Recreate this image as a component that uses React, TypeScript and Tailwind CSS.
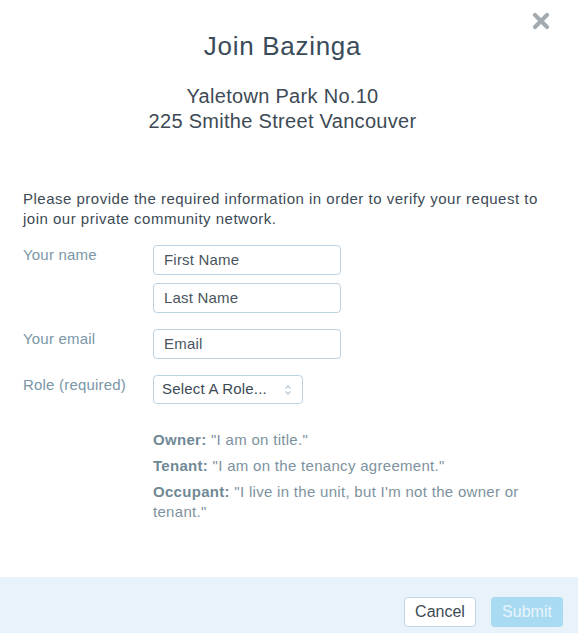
import React from "react";

export default function App() {
  return (
    <div
      className="relative w-[578px] h-[633px] bg-white flex flex-col text-[#3d4a55] overflow-hidden"
      style={{ fontFamily: '"Liberation Sans", Arial, sans-serif' }}
    >
      <button className="absolute left-[532px] top-[12px] w-[18px] h-[18px]" aria-label="Close">
        <svg viewBox="0 0 18 18" width="18" height="18">
          <path d="M3 3 L15 15 M15 3 L3 15" stroke="#a3abb0" strokeWidth="4.2" strokeLinecap="round" />
        </svg>
      </button>

      <div className="flex-1 flex flex-col">
        <div className="pr-[13px] flex flex-col items-center">
          <h1 className="mt-[30px] text-[26px] leading-[32px] tracking-[0.7px] text-[#3a4b5a]">Join Bazinga</h1>
          <div className="mt-[22px] text-[20px] leading-[25px] tracking-[0.3px] text-center text-[#3d4a55]">
            <div>Yaletown Park No.10</div>
            <div>225 Smithe Street Vancouver</div>
          </div>
        </div>

        <p className="mt-[55px] pl-[23px] pr-[30px] text-[15px] leading-[20px] tracking-[0.5px] text-[#3d4a55]">
          Please provide the required information in order to verify your request to join our private community network.
        </p>

        <div className="mt-[16px] px-[23px] flex flex-col gap-[16px] text-[15px] tracking-[0.2px]">
          <div className="flex">
            <div className="w-[130px] leading-[20px] text-[#7a96a8]">Your name</div>
            <div className="flex flex-col gap-[8px]">
              <div className="w-[188px] h-[30px] border border-[#bcd3e4] rounded-[4px] px-[10px] flex items-center text-[#4a5560]">First Name</div>
              <div className="w-[188px] h-[30px] border border-[#bcd3e4] rounded-[4px] px-[10px] flex items-center text-[#4a5560]">Last Name</div>
            </div>
          </div>
          <div className="flex">
            <div className="w-[130px] leading-[20px] text-[#7a96a8]">Your email</div>
            <div className="w-[188px] h-[30px] border border-[#bcd3e4] rounded-[4px] px-[10px] flex items-center text-[#4a5560]">Email</div>
          </div>
          <div className="flex">
            <div className="w-[130px] leading-[20px] text-[#7a96a8]">Role (required)</div>
            <div className="w-[150px] h-[29px] border border-[#bcd3e4] rounded-[4px] pl-[8px] pr-[10px] flex items-center justify-between text-[#3d4a55]">
              <span>Select A Role...</span>
              <svg width="8" height="12" viewBox="0 0 8 12">
                <path d="M1.5 4.5 L4 2 L6.5 4.5 M1.5 7.5 L4 10 L6.5 7.5" stroke="#b8c8d6" strokeWidth="1.3" fill="none" />
              </svg>
            </div>
          </div>
        </div>

        <div className="mt-[26px] pl-[153px] pr-[40px] flex flex-col gap-[6px] text-[15px] leading-[20px] tracking-[0.3px] text-[#7d929e]">
          <div><b className="text-[#718996]">Owner:</b> "I am on title."</div>
          <div><b className="text-[#718996]">Tenant:</b> "I am on the tenancy agreement."</div>
          <div><b className="text-[#718996]">Occupant:</b> "I live in the unit, but I'm not the owner or tenant."</div>
        </div>
      </div>

      <div className="h-[56px] bg-[#e8f2fb] flex items-start justify-end gap-[15px] pr-[15px] pt-[20px]">
        <button className="w-[72px] h-[30px] bg-white border border-[#c4d6e4] rounded-[4px] text-[16px] text-[#3d4a55]">Cancel</button>
        <button className="w-[72px] h-[30px] bg-[#a8daf1] rounded-[4px] text-[16px] text-[#e8f5fc]">Submit</button>
      </div>
    </div>
  );
}
